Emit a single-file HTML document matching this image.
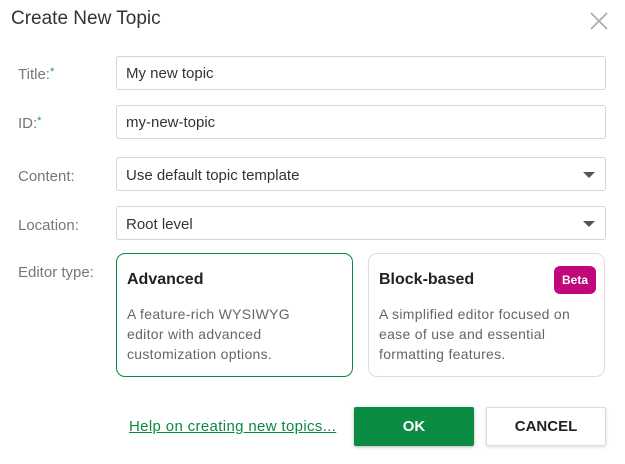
<!DOCTYPE html>
<html><head><style>
body{margin:0;width:625px;height:464px;background:#fff;font-family:"Liberation Sans",sans-serif;position:relative;overflow:hidden;color:#333}
.a{position:absolute}
.lbl{position:absolute;left:18px;font-size:15px;color:#777}
.lbl b{color:#1a9a3a;font-weight:normal;font-size:11px;vertical-align:top}
.inp{position:absolute;left:116px;width:490px;height:34px;border:1px solid #d5d5d5;border-radius:3px;box-sizing:border-box;padding:0 9px;font-size:15px;line-height:34px;color:#333}
.arr{position:absolute;right:10px;top:14px;width:0;height:0;border-left:6px solid transparent;border-right:6px solid transparent;border-top:6px solid #555}
.card{position:absolute;top:253px;width:237px;height:124px;box-sizing:border-box;border-radius:9px;padding:17px 10px}
.card h3{margin:0 0 15px;font-size:16px;font-weight:bold;color:#222}
.card p{margin:0;font-size:14px;line-height:20px;color:#666;letter-spacing:0.3px}
</style></head><body>
<div class="a" style="left:11px;top:8px;font-size:19px;color:#333">Create New Topic</div>
<svg class="a" style="left:590px;top:12px" width="18" height="18"><path d="M1 1L17 17M17 1L1 17" stroke="#aaa" stroke-width="1.6"/></svg>
<div class="lbl" style="top:66px">Title:<b>*</b></div>
<div class="inp" style="top:56px">My new topic</div>
<div class="lbl" style="top:115px">ID:<b>*</b></div>
<div class="inp" style="top:105px">my-new-topic</div>
<div class="lbl" style="top:168px">Content:</div>
<div class="inp" style="top:157px;line-height:36px">Use default topic template<div class="arr"></div></div>
<div class="lbl" style="top:217px">Location:</div>
<div class="inp" style="top:206px;line-height:36px">Root level<div class="arr"></div></div>
<div class="lbl" style="top:264px">Editor type:</div>
<div class="card" style="left:116px;border:1px solid #0a8a3e"><h3>Advanced</h3><p style="width:180px">A feature-rich WYSIWYG editor with advanced customization options.</p></div>
<div class="card" style="left:368px;border:1px solid #ddd"><h3>Block-based</h3><p>A simplified editor focused on ease of use and essential formatting features.</p>
<div class="a" style="left:185px;top:12px;width:42px;height:28px;background:#c0087a;border-radius:6px;color:#fff;font-size:12px;font-weight:bold;text-align:center;line-height:28px">Beta</div></div>
<div class="a" style="left:129px;top:418px;font-size:15px;letter-spacing:0.35px;color:#0a8a3e;text-decoration:underline">Help on creating new topics...</div>
<div class="a" style="left:354px;top:407px;width:120px;height:39px;background:#0a8c43;border-radius:2px;color:#fff;font-weight:bold;font-size:15px;text-align:center;line-height:39px;box-shadow:0 1px 3px rgba(0,0,0,.3)">OK</div>
<div class="a" style="left:486px;top:407px;width:120px;height:39px;box-sizing:border-box;border:1px solid #ddd;border-radius:2px;color:#222;font-weight:bold;font-size:15px;text-align:center;line-height:37px;box-shadow:0 1px 3px rgba(0,0,0,.15)">CANCEL</div>
</body></html>
